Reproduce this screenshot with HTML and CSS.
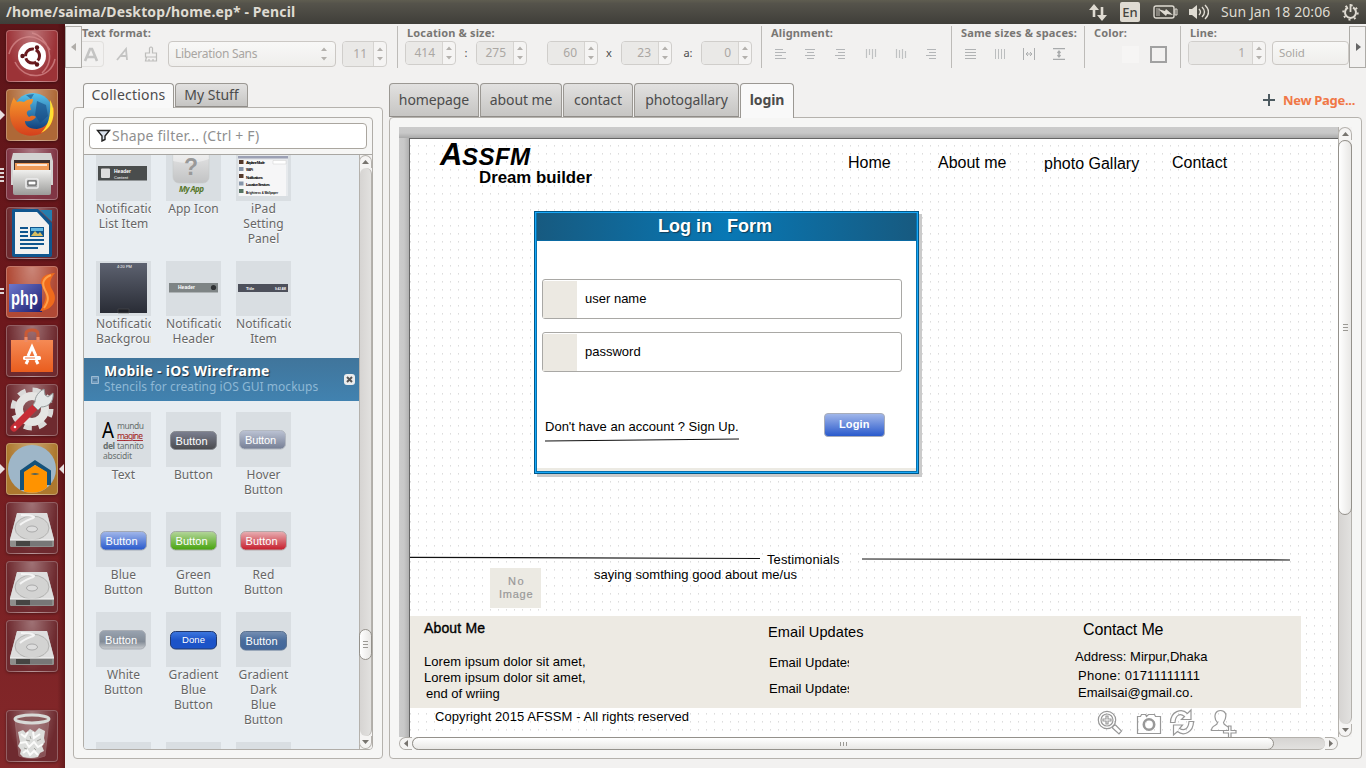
FILE: index.html
```html
<!DOCTYPE html>
<html lang="en">
<head>
<meta charset="utf-8">
<title>home.ep - Pencil</title>
<link rel="stylesheet" href="styles.css">
</head>
<body>
<svg class="defs" width="0" height="0">
  <defs>
    <linearGradient id="steel" x1="0" y1="0" x2="0" y2="1"><stop offset="0" stop-color="#f0f0ee"/><stop offset="1" stop-color="#9b9b99"/></linearGradient>
    <linearGradient id="appicon" x1="0" y1="0" x2="0" y2="1"><stop offset="0" stop-color="#f4f4f4"/><stop offset="1" stop-color="#c2c3c4"/></linearGradient>
    <linearGradient id="globe" x1="0" y1="0" x2="0" y2="1"><stop offset="0" stop-color="#57c4ee"/><stop offset="1" stop-color="#0a3270"/></linearGradient>
    <linearGradient id="fox" x1="0" y1="0" x2="0" y2="1"><stop offset="0" stop-color="#f79a2c"/><stop offset="1" stop-color="#d5401c"/></linearGradient>
    <linearGradient id="orange" x1="0" y1="0" x2="0" y2="1"><stop offset="0" stop-color="#f58a55"/><stop offset="1" stop-color="#e95d1e"/></linearGradient>
    <linearGradient id="php" x1="0" y1="0" x2="1" y2="1"><stop offset="0" stop-color="#6d78cc"/><stop offset="1" stop-color="#1d1e70"/></linearGradient>
    <linearGradient id="dlg" x1="0" y1="0" x2="1" y2="0"><stop offset="0" stop-color="#175a80"/><stop offset=".5" stop-color="#0878b5"/><stop offset="1" stop-color="#175a80"/></linearGradient>
    <linearGradient id="gBlue" x1="0" y1="0" x2="0" y2="1"><stop offset="0" stop-color="#a3b8ea"/><stop offset="1" stop-color="#2758cc"/></linearGradient>
    <linearGradient id="gGreen" x1="0" y1="0" x2="0" y2="1"><stop offset="0" stop-color="#b5d69c"/><stop offset="1" stop-color="#46a30c"/></linearGradient>
    <linearGradient id="gRed" x1="0" y1="0" x2="0" y2="1"><stop offset="0" stop-color="#e8b0b4"/><stop offset="1" stop-color="#c61c2a"/></linearGradient>
    <linearGradient id="gDark" x1="0" y1="0" x2="0" y2="1"><stop offset="0" stop-color="#7c8090"/><stop offset="1" stop-color="#4a4b4f"/></linearGradient>
    <linearGradient id="gHover" x1="0" y1="0" x2="0" y2="1"><stop offset="0" stop-color="#bcc3d4"/><stop offset="1" stop-color="#757e94"/></linearGradient>
    <linearGradient id="gWhite" x1="0" y1="0" x2="0" y2="1"><stop offset="0" stop-color="#99a3b0"/><stop offset=".6" stop-color="#838c97"/><stop offset="1" stop-color="#c9cccf"/></linearGradient>
    <linearGradient id="gDone" x1="0" y1="0" x2="0" y2="1"><stop offset="0" stop-color="#3e78df"/><stop offset=".5" stop-color="#1c53c8"/><stop offset="1" stop-color="#1c53c8"/></linearGradient>
    <linearGradient id="gNavy" x1="0" y1="0" x2="0" y2="1"><stop offset="0" stop-color="#7790b3"/><stop offset=".5" stop-color="#496c9c"/><stop offset="1" stop-color="#42669a"/></linearGradient>
    <linearGradient id="gNight" x1="0" y1="0" x2="0" y2="1"><stop offset="0" stop-color="#5d6270"/><stop offset="1" stop-color="#292c35"/></linearGradient>
    <pattern id="dots" x="0" y="6" width="8" height="8" patternUnits="userSpaceOnUse"><rect width="1" height="1.6" fill="#dcdcdc"/></pattern>
    <symbol id="drive" viewBox="0 0 52 52">
      <path d="M11 11h30l7 26v6q0 2-2 2H6q-2 0-2-2v-6z" fill="#b8b8b6"/>
      <path d="M11 11h30l7 27H4z" fill="#dedede"/>
      <ellipse cx="26" cy="26" rx="17" ry="12" fill="#d3d3d2" stroke="#b2b2b0"/>
      <path d="M15 13c8 0 12 1 13 2s-9 3-14 8" fill="none" stroke="#f4f4f4" stroke-width="2"/>
      <ellipse cx="26" cy="27" rx="5.500" ry="3" fill="#ddd" stroke="#aaa"/>
      <path d="M4 38h44v5q0 2-2 2H6q-2 0-2-2z" fill="#8e8e8c"/>
      <path d="M10 39h26v5H10z" fill="#454543"/><path d="M24 39h22v5H24z" fill="#777"/><path d="M4 38h44" stroke="#f6f6f6"/>
    </symbol>
    <symbol id="al" viewBox="0 0 12 12"><path d="M1 1.500h8M1 4.500h11M1 7.500h7M1 10.500h11" stroke="#b4b6b8"/></symbol>
    <symbol id="ac" viewBox="0 0 12 12"><path d="M1 1.500h10M3 4.500h7M1 7.500h10M3 10.500h7" stroke="#b4b6b8"/></symbol>
    <symbol id="ar" viewBox="0 0 12 12"><path d="M2 1.500h9M4 4.500h7M1 7.500h10M4 10.500h7" stroke="#b4b6b8"/></symbol>
    <symbol id="up" viewBox="0 0 12 12"><path d="M1.500 1v9M4.500 1v6M7.500 1v10M10.500 1v8" stroke="#c0c2c3" stroke-width="1.200"/></symbol>
    <symbol id="mid" viewBox="0 0 12 12"><path d="M1.500 1v9M4.500 2v8M7.500 1v10M10.500 3v7" stroke="#c0c2c3" stroke-width="1.200"/></symbol>
    <symbol id="steps" viewBox="0 0 12 26"><path d="M3 10l3-3.500L9 10zM3 16l3 3.500L9 16z" fill="#b4b1ad"/></symbol>
  </defs>
</svg>

<header class="menubar">
  <h1 class="wintitle">/home/saima/Desktop/home.ep* - Pencil</h1>
  <div class="tray">
    <svg width="20" height="20" viewBox="0 0 20 20"><path d="M6 4v11M14 5v11" stroke="#dfdbd2" stroke-width="2.600"/><path d="M1 8l5-6 5 6zM9 13l5 6 5-6z" fill="#dfdbd2"/></svg>
    <span class="lang">En</span>
    <svg class="batt" width="25" height="14" viewBox="0 0 25 14"><rect x="1" y="1" width="20" height="12" rx="2" fill="none" stroke="#dfdbd2" stroke-width="1.400"/><path d="M22 4h2v6h-2z" fill="none" stroke="#dfdbd2"/><path d="M3 3h4v8H3z" fill="#85827b"/><path d="M5 4l7 2 1-2 7 6-6-1-1 2z" fill="#dfdbd2"/></svg>
    <svg class="snd" width="20" height="16" viewBox="0 0 20 16"><path d="M0 5h3l5-4v14l-5-4H0z" fill="#dfdbd2"/><path d="M10 5q3 3 0 6M13 3q5 5 0 10M16 1q7 7 0 14" fill="none" stroke="#dfdbd2" stroke-width="1.400"/></svg>
    <span class="clock">Sun Jan 18 20:06</span>
    <svg width="17" height="17" viewBox="0 0 17 17"><path d="M6 3.500a5.500 5.500 0 1 0 5 0" fill="none" stroke="#dfdbd2" stroke-width="2"/><path d="M8.500 0v8" stroke="#dfdbd2" stroke-width="1.800"/><circle cx="8.500" cy="8.500" r="7.200" fill="none" stroke="#dfdbd2" stroke-width="2" stroke-dasharray="2 3.650"/></svg>
  </div>
</header>

<div class="desktop">
<nav class="launcher">
  <div class="tile red"><svg viewBox="0 0 52 52"><path d="M3 24C8 4 32 0 44 20M49 29C45 49 19 52 9 32M26 3c15 3 25 26 10 40" fill="none" stroke="#d98e90" stroke-width="1.500" opacity=".7"/><circle cx="26" cy="26" r="14" fill="#fff"/><circle cx="26.500" cy="26" r="7" fill="none" stroke="#6b1a1e" stroke-width="3" stroke-dasharray="12.600 2" stroke-dashoffset="-7"/><circle cx="16.500" cy="26" r="2.200" fill="#5c1519"/><circle cx="31" cy="17.500" r="2.200" fill="#5c1519"/><circle cx="31" cy="34.500" r="2.200" fill="#5c1519"/></svg></div>
  <div class="tile tan"><i class="pip"></i><svg viewBox="0 0 52 52"><circle cx="27" cy="24" r="20" fill="url(#globe)"/><path d="M31 12l9 4 2 11-8 7-5-8zM20 6l8-1-3 5z" fill="#164b86" opacity=".6"/><path d="M8 8c-6 12-4 18-3 24 4 14 18 17 29 13 10-4 15-14 14-27l-3 4c0 10-5 17-14 18-9 0-12-4-12-8 4 1 8 0 11-4-3-2-5-1-7 0-4-4-2-7 2-7l-1-5c2-1 3-3 3-6-4 0-7 1-9 3-3-1-5-1-7 0-2-2-3-4-3-5z" fill="url(#fox)"/><path d="M44 11c6 10 5 27-9 33 7-7 10-16 9-33z" fill="#ffdf32"/></svg></div>
  <div class="tile wine"><i class="pips"></i><svg viewBox="0 0 52 52"><path d="M7 5h38l2 8v24H5V13z" fill="#d3d3d2"/><path d="M8 12h36v12H8z" fill="#3d302d"/><path d="M9 15h34v9H9z" fill="#ee9b57"/><path d="M11 17h30" stroke="#fff" stroke-width="1.500"/><path d="M7 22h38v23q0 2-2 2H9q-2 0-2-2z" fill="url(#steel)"/><rect x="20" y="31" width="12" height="9" rx="1" fill="#aaa" stroke="#eee" stroke-width="1.600"/><path d="M22 33h8v4h-8z" fill="#fff" stroke="#555"/></svg></div>
  <div class="tile dark"><svg viewBox="0 0 52 52"><path d="M6 3q0-1 2-1h24l14 14v32q0 2-2 2H8q-2 0-2-2z" fill="#10568e"/><path d="M9 5h22l12 13v29H9z" fill="#f1f1f0"/><path d="M34 3h12v12z" fill="#247eae"/><path d="M14 21h8M14 25h8M14 29h8M14 33h24M14 37h24M14 41h18" stroke="#10568e" stroke-width="2"/><path d="M24 20h14v10H24z" fill="#10568e"/><path d="M25 21h12v3H25z" fill="#65b9e0"/><path d="M25 29l4-5 3 3 2-2 3 4z" fill="#dabd60"/></svg></div>
  <div class="tile rust"><i class="pips two"></i><svg viewBox="0 0 52 52"><path d="M3 18h33v28H3z" fill="url(#php)"/><path d="M49 7C35 8 33 15 37 22c3 6 5 10-3 23 13-1 18-11 13-20-4-6-4-11 2-18z" fill="#ef6a1c"/><path d="M45 9c-9 4-9 9-6 15 4 7 4 11-1 18" fill="none" stroke="#ffa04a" stroke-width="2"/><text x="5" y="39" class="phptext" textLength="27" lengthAdjust="spacingAndGlyphs">php</text></svg></div>
  <div class="tile dark"><svg viewBox="0 0 52 52"><path d="M20 17V9q0-4 6-4t6 4v8" fill="none" stroke="#c95a35" stroke-width="3"/><path d="M5 15h42v32H5z" fill="url(#orange)"/><path d="M20 17v-5M32 17v-5" stroke="#ed8b67" stroke-width="3"/><path d="M20 39l2-4M32 39l-2-4M22 31l4-9 4 9" fill="none" stroke="#fff" stroke-width="3"/><rect x="17" y="31" width="18" height="4" rx="1.500" fill="#fff"/><path d="M19 33h10" stroke="#ee7440"/></svg></div>
  <div class="tile dark"><svg viewBox="0 0 52 52"><circle cx="26" cy="25" r="19" fill="none" stroke="#dadad9" stroke-width="5" stroke-dasharray="8 6.920"/><circle cx="26" cy="25" r="13" fill="none" stroke="#e5e5e3" stroke-width="8"/><path d="M8 44L30 22" stroke="#c72d36" stroke-width="7" stroke-linecap="round"/><path d="M29 18c0-5 3-10 9-13l1 6 3 2 5-4c1 8-4 14-12 14l-3 3-5-5z" fill="#e3e7e7" stroke="#949b9b"/><circle cx="9" cy="43" r="1.300" fill="#fff"/></svg></div>
  <div class="tile gold"><i class="pip"></i><i class="pip focus"></i><svg viewBox="0 0 52 52"><circle cx="26" cy="26" r="24" fill="#9eb6c8"/><path d="M16 47V28.500l13-9 14 9V42" fill="none" stroke="#15527a" stroke-width="4"/><path d="M18 48.500V29l11-7 12 7v15.500q-10 8-23 4z" fill="#ff9300"/><path d="M24.500 31q4.500-1.500 9 0-4.500 1.500-9 0z" fill="#15527a"/></svg></div>
  <div class="tile dark"><svg><use href="#drive"/></svg></div>
  <div class="tile dark"><svg><use href="#drive"/></svg></div>
  <div class="tile dark"><svg><use href="#drive"/></svg></div>
  <div class="tile dark trash"><svg viewBox="0 0 52 52"><path d="M9 9h34l-4 37q-13 5-26 0z" fill="#d4c4c4" opacity=".25" stroke="#eee"/><path d="M12 22l5-2 3 3 4-4 5 3 4-4 6 3-1 7 1 4-3 4 2 5-4 2-2 4q-7 2-15 0l-3-3 1-4-3-4 2-4z" fill="#dcdddb"/><path d="M15 24l4 3 3-5M27 22l1 6 6-4M14 33l6-1 3 5 5-5 4 5 5-3M17 43l4-3 3 5 4-4 4 4" fill="none" stroke="#fbfbfa" stroke-width="2"/><path d="M20 30l4 1M31 31l4-2M18 38l3 1M28 38l2 2M24 26l1 3" stroke="#a3a39f"/><ellipse cx="26" cy="9" rx="17" ry="4" fill="#8a5a5c" stroke="#d8dad7" stroke-width="3"/></svg></div>
</nav>

<main class="app">
  <section class="toolbar">
    <button class="scroller"><svg width="8" height="10" viewBox="0 0 8 10"><path d="M6 1v8L1 5z" fill="#b0ada9"/></svg></button>
    <div class="group g-text"><h2>Text format:</h2>
      <div class="row">
        <span class="bold"><svg width="18" height="18" viewBox="0 0 18 18"><path d="M3 15L8 3h2l5 12M5 11h8" fill="none" stroke="#c4c4c3" stroke-width="2.600"/></svg></span>
        <svg class="ital" width="16" height="16" viewBox="0 0 16 16"><path d="M2 14L11 3l1 11M5 10h7" fill="none" stroke="#c4c4c3" stroke-width="1.800"/></svg>
        <svg class="brush" width="14" height="18" viewBox="0 0 14 18"><path d="M5.500 8V3q1.500-2 3 0v5h4v4h-11V8zM2.500 12l-1 4h11v-4M5 16v-2M9 16v-2" fill="none" stroke="#bdbdbb" stroke-width="1.200"/></svg>
        <span class="select font">Liberation Sans<svg width="12" height="26"><use href="#steps"/></svg></span>
        <span class="spin size"><b>11</b><svg width="12" height="26"><use href="#steps"/></svg></span>
      </div></div>
    <div class="group g-loc"><h2>Location &amp; size:</h2>
      <div class="row">
        <span class="spin"><b>414</b><svg width="12" height="24" viewBox="0 1 12 24"><use href="#steps" width="12" height="26"/></svg></span><span class="sep s1">:</span>
        <span class="spin"><b>275</b><svg width="12" height="24" viewBox="0 1 12 24"><use href="#steps" width="12" height="26"/></svg></span><span class="sep s2"></span>
        <span class="spin"><b>60</b><svg width="12" height="24" viewBox="0 1 12 24"><use href="#steps" width="12" height="26"/></svg></span><span class="sep s3">x</span>
        <span class="spin"><b>23</b><svg width="12" height="24" viewBox="0 1 12 24"><use href="#steps" width="12" height="26"/></svg></span><span class="sep s4">a:</span>
        <span class="spin"><b>0</b><svg width="12" height="24" viewBox="0 1 12 24"><use href="#steps" width="12" height="26"/></svg></span>
      </div></div>
    <div class="group g-align"><h2>Alignment:</h2>
      <div class="row icons"><svg><use href="#al"/></svg><svg><use href="#ac"/></svg><svg><use href="#ar"/></svg><svg><use href="#up"/></svg><svg><use href="#mid"/></svg><svg><use href="#ar"/></svg></div></div>
    <div class="group g-same"><h2>Same sizes &amp; spaces:</h2>
      <div class="row icons"><svg viewBox="0 0 12 12"><path d="M1 1.500h11M1 4.500h11M1 7.500h11M1 10.500h11" stroke="#b0b2b3"/></svg><svg viewBox="0 0 12 12"><path d="M1.500 1v10M4.500 1v10M7.500 1v10M10.500 1v10" stroke="#bcbebf"/></svg><svg viewBox="0 0 12 12"><path d="M.5 0v12M11.500 0v12M3 6h6M5 4L3 6l2 2M7 4l2 2-2 2" fill="none" stroke="#adafb0"/></svg><svg viewBox="0 0 12 12"><path d="M0 .7h12M0 11.300h12M6 3v6M4.500 5L6 3l1.500 2M4.500 7L6 9l1.500-2" fill="none" stroke="#a8aaab" stroke-width="1.300"/></svg></div></div>
    <div class="group g-color"><h2>Color:</h2>
      <div class="row"><span class="swatch"></span><span class="swatch outline"></span></div></div>
    <div class="group g-line"><h2>Line:</h2>
      <div class="row"><span class="spin wide"><b>1</b><svg width="12" height="24" viewBox="0 1 12 24"><use href="#steps" width="12" height="26"/></svg></span><span class="select solid">Solid</span></div></div>
    <button class="scroller right"><svg width="8" height="10" viewBox="0 0 8 10"><path d="M2 1v8l5-4z" fill="#666"/></svg></button>
  </section>

  <div class="work">
    <aside class="side">
      <div class="tabs small"><span class="tab on t-col">Collections</span><span class="tab t-my">My Stuff</span></div>
      <div class="panel sidepanel"><div class="box">
        <div class="filter"><svg width="15" height="13" viewBox="0 0 15 13"><path d="M1.500 1.500h12L9 7v3.500L6 12V7z" fill="#dbe3ee" stroke="#222" stroke-width="1.400"/></svg><span>Shape filter... (Ctrl + F)</span></div>
        <div class="listrow">
          <div class="list">
            <div class="shapes first">
              <figure><svg viewBox="0 0 55 55"><rect x="2" y="20" width="49" height="14.500" fill="#4a4d4d"/><rect x="5" y="22.500" width="9" height="9.500" rx="1" fill="#ddd"/><text x="18" y="27" class="t5 w b">Header</text><text x="18" y="32.500" class="t4 w">Content</text></svg><figcaption>Notification List Item</figcaption></figure>
              <figure><svg viewBox="0 0 55 55"><rect x="7" y="-8" width="36" height="45" rx="6" fill="url(#appicon)" stroke="#c8c9ca" stroke-width=".6"/><path d="M7 15q18 5 36-2V6H7z" fill="#fff" opacity=".4"/><text x="18" y="29" class="q">?</text><text x="13" y="46" class="t7 my" textLength="25">My App</text></svg><figcaption>App Icon</figcaption></figure>
              <figure><svg viewBox="0 0 55 55"><path d="M2 0h50v50H2z" fill="#e6e9ec"/><path d="M2 10h50v2.500H2z" fill="#9ba0b4"/><path d="M3 14h47v36H3z" fill="#f6f6f7"/><path d="M3 14h4.500v4H3zM3 28h4.500v4H3z" fill="#54392b"/><path d="M3 21h4.500v4H3zM3 35.500h4.500v4H3z" fill="#8796aa"/><path d="M3 43h4.500v4H3z" fill="#567362"/><g class="t4 b"><text x="10" y="18" textLength="19">Airplane Mode</text><text x="10" y="25" textLength="7">Wi-Fi</text><text x="10" y="32.500" textLength="17">Notifications</text><text x="10" y="40" textLength="24">Location Services</text><text x="10" y="47.500" textLength="32" lengthAdjust="spacingAndGlyphs">Brightness &amp; Wallpaper</text></g><path d="M37 14.500h13v3.500H37z" fill="#fff" stroke="#ccc" stroke-width=".5"/></svg><figcaption>iPad Setting Panel</figcaption></figure>
              <figure><svg viewBox="0 0 55 55"><path d="M4 2h47v50H4z" fill="url(#gNight)"/><path d="M22 48h11v4H22z" fill="#202229" stroke="#555" stroke-width=".5"/><text x="21" y="6.500" class="t4 w">4:20 PM</text></svg><figcaption>Notification Background</figcaption></figure>
              <figure><svg viewBox="0 0 55 55"><path d="M3 22h49v9H3z" fill="#7e8485"/><path d="M3 31.500h49" stroke="#aeb3b5"/><text x="12" y="28" class="t5 w b">Header</text><circle cx="47.500" cy="26.500" r="2.600" fill="#2e3133"/></svg><figcaption>Notification Header</figcaption></figure>
              <figure><svg viewBox="0 0 55 55"><path d="M2 23h50v8H2z" fill="#4d505b"/><text x="10" y="29" class="t4 w b">Title</text><text x="39" y="29" class="t4 w b" textLength="11" lengthAdjust="spacingAndGlyphs">9:42 AM</text></svg><figcaption>Notification Item</figcaption></figure>
            </div>
            <div class="band"><svg class="minus" width="8" height="8" viewBox="0 0 8 8"><path d="M.5.5h7v7h-7z" fill="#6c98bc" stroke="#9dbbd2"/><path d="M2 4h4" stroke="#2c5878"/></svg>
              <div class="bandtext"><strong>Mobile - iOS Wireframe</strong><span>Stencils for creating iOS GUI mockups</span></div>
              <svg width="11" height="11" viewBox="0 0 11 11"><rect width="11" height="11" rx="3" fill="#eceded"/><path d="M3 3l5 5M8 3L3 8" stroke="#555" stroke-width="2"/></svg></div>
            <div class="shapes">
              <figure><svg viewBox="0 0 55 55"><text x="6" y="26" class="bigA" textLength="12" lengthAdjust="spacingAndGlyphs">A</text><g class="t8"><text x="21" y="17" textLength="27">mundu</text><text x="21" y="27" class="mag" textLength="26">magine</text><text x="7" y="37" class="b" textLength="12">del</text><text x="21" y="37" textLength="27">tannito</text><text x="7" y="47" textLength="29">abscidit</text></g></svg><figcaption>Text</figcaption></figure>
              <figure><svg viewBox="0 0 55 55"><rect x="4.500" y="19.500" width="46" height="18" rx="5" fill="url(#gDark)" stroke="#888b91"/><text x="9.500" y="32.500" class="btn" textLength="32">Button</text></svg><figcaption>Button</figcaption></figure>
              <figure><svg viewBox="0 0 55 55"><rect x="3.500" y="18.500" width="46" height="18.500" rx="5" fill="url(#gHover)" stroke="#b3b8c0"/><text x="9" y="31.500" class="btn" textLength="31">Button</text></svg><figcaption>Hover Button</figcaption></figure>
              <figure><svg viewBox="0 0 55 55"><rect x="4.500" y="19.500" width="46" height="18.500" rx="5" fill="url(#gBlue)" stroke="#a2a8b3"/><text x="9.500" y="32.500" class="btn" textLength="32">Button</text></svg><figcaption>Blue Button</figcaption></figure>
              <figure><svg viewBox="0 0 55 55"><rect x="4.500" y="19.500" width="46" height="18.500" rx="5" fill="url(#gGreen)" stroke="#a5aca3"/><text x="9.500" y="32.500" class="btn" textLength="32">Button</text></svg><figcaption>Green Button</figcaption></figure>
              <figure><svg viewBox="0 0 55 55"><rect x="4.500" y="19.500" width="46" height="18.500" rx="5" fill="url(#gRed)" stroke="#b3a8a9"/><text x="9.500" y="32.500" class="btn" textLength="32">Button</text></svg><figcaption>Red Button</figcaption></figure>
              <figure><svg viewBox="0 0 55 55"><rect x="3.500" y="18.500" width="46" height="18.500" rx="5" fill="url(#gWhite)" stroke="#a7acb3"/><text x="9" y="31.500" class="btn" textLength="32">Button</text></svg><figcaption>White Button</figcaption></figure>
              <figure><svg viewBox="0 0 55 55"><rect x="4.500" y="19.500" width="46" height="17.500" rx="5" fill="url(#gDone)" stroke="#21386d"/><text x="16" y="31" class="btn sm" textLength="23">Done</text></svg><figcaption>Gradient Blue Button</figcaption></figure>
              <figure><svg viewBox="0 0 55 55"><rect x="4.500" y="19.500" width="46" height="18.500" rx="5" fill="url(#gNavy)" stroke="#5c7391"/><text x="9.500" y="32.500" class="btn" textLength="32">Button</text></svg><figcaption>Gradient Dark<br>Blue Button</figcaption></figure>
              <figure><svg></svg></figure><figure><svg></svg></figure><figure><svg></svg></figure>
            </div>
          </div>
          <div class="vbar"><i class="cap top"><svg width="7" height="4" viewBox="0 0 7 4"><path d="M0 4l3.500-4L7 4z"/></svg></i><div class="trough"><i class="thumb"><u></u></i></div><i class="cap bot"><svg width="7" height="4" viewBox="0 0 7 4"><path d="M0 0h7L3.500 4z"/></svg></i></div>
        </div>
      </div></div>
    </aside>

    <section class="editor">
      <div class="tabs big"><span class="tab p1">homepage</span><span class="tab p2">about me</span><span class="tab p3">contact</span><span class="tab p4">photogallary</span><span class="tab on p5">login</span>
        <span class="newpage"><svg width="12" height="12" viewBox="0 0 12 12"><path d="M6 0v12M0 6h12" stroke="#4d5a60" stroke-width="2"/></svg><span>New Page...</span></span></div>
      <div class="panel editpanel">
        <div class="view">
          <div class="sheet">
            <svg class="canvas" width="928" height="598" viewBox="410 139 928 598">
              <svg x="410" y="139" width="928" height="598"><rect width="928" height="598" fill="#fff"/><rect width="928" height="598" fill="url(#dots)"/></svg>
              <g class="logo"><text x="440" y="165" font-size="31">A</text><text x="462" y="165" font-size="24" textLength="68">SSFM</text></g>
              <text x="479" y="183" class="b" font-size="16.800" textLength="113">Dream builder</text>
              <g font-size="16"><text x="848" y="168">Home</text><text x="938" y="168">About me</text><text x="1044" y="169">photo Gallary</text><text x="1172" y="168">Contact</text></g>

              <rect x="537" y="214" width="385" height="263" fill="#cacaca"/>
              <rect x="534.500" y="211.500" width="384" height="262" fill="#fff" stroke="#00588a"/>
              <rect x="535.500" y="212.500" width="382" height="260" fill="none" stroke="#18a8f8"/>
              <rect x="536.500" y="213.500" width="380" height="258" fill="none" stroke="#0872ae"/>
              <rect x="537" y="213" width="379" height="27" fill="url(#dlg)"/><path d="M537 240.500h379" stroke="#0b6aa2"/>
              <path d="M537 468h379v3H537z" fill="#eceae3"/>
              <g class="b" font-size="18"><g class="shade" aria-hidden="true"></g><text class="w lift" x="658" y="232">Log in</text><text class="w lift" x="727" y="232">Form</text></g>
              <g fill="#fff" stroke="#a9a8a5"><rect x="542.500" y="279.500" width="359" height="39" rx="2.500"/><rect x="542.500" y="332.500" width="359" height="39" rx="2.500"/></g>
              <path d="M543 281h34v37h-34zM543 334h34v37h-34z" fill="#ece9e2"/>
              <g font-size="13"><text x="585" y="303">user name</text><text x="585" y="356">password</text><text x="545" y="431" textLength="193.500">Don't have an account ? Sign Up.</text></g>
              <path d="M545 441l194-2" stroke="#111" stroke-width="1.200"/>
              <rect x="824.500" y="413.500" width="60" height="23" rx="3.500" fill="url(#gBlue)" stroke="#a8adba"/>
              <text x="839" y="428" class="b w" font-size="11" textLength="30.500">Login</text>

              <path d="M410 557.300l350 1.200M862 559l428 1" stroke="#111" stroke-width="1.200"/>
              <path d="M490 568h51v40h-51z" fill="#eceae3"/>
              <g class="noimg"><text x="508" y="585" textLength="15.500">No</text><text x="499" y="598" textLength="33.500">Image</text></g>
              <g font-size="13"><text x="767" y="564" textLength="72.500">Testimonials</text><text x="594" y="579" textLength="203">saying somthing good about me/us</text></g>
              <path d="M410 616h891v92H410z" fill="#edeae3"/>
              <text x="424" y="633" class="about" textLength="61">About Me</text>
              <text x="768" y="637" font-size="14.600" textLength="95.500">Email Updates</text>
              <text x="1083" y="635" font-size="16" textLength="80.500">Contact Me</text>
              <g font-size="13">
                <text x="424" y="666" textLength="161.500">Lorem ipsum dolor sit amet,</text><text x="424" y="682" textLength="161.500">Lorem ipsum dolor sit amet,</text><text x="426" y="698">end of wriing</text>
                <svg x="769" y="650" width="80" height="50"><text x="0" y="17">Email Updates</text><text x="0" y="43">Email Updates</text></svg>
                <text x="1075" y="661" textLength="132.500">Address: Mirpur,Dhaka</text><text x="1078" y="680" textLength="122">Phone: 01711111111</text><text x="1078" y="697" textLength="115">Emailsai@gmail.co.</text>
                <text x="435" y="721" textLength="254">Copyright 2015 AFSSM - All rights reserved</text>
              </g>
              <g fill="none" stroke="#989898" stroke-width="1.200">
                <circle cx="1107" cy="720" r="8.700"/><circle cx="1107" cy="720" r="6"/><path d="M1106 716v3h-3v2h3v3h2v-3h3v-2h-3v-3zM1113 726l2.500-1 6 6-2.500 3-6.500-6z"/>
                <path d="M1137.500 716.500h3l1-2h4l1 2 2-2h6l1 2h5v17h-23z"/><circle cx="1149" cy="724.500" r="5.200" stroke-width="2.600"/>
                <path d="M1170.500 722.500c0-11 11-15 17-9l3.500-3.500v9.500h-9.500l3-3c-5-4-9-1-9.500 6zM1193.500 721.500c0 11-10 15-16 10l-4 3.500v-10h9l-3 3.500c5 3 9 0 9.500-7z"/>
                <path d="M1223 730.500h-11.500c0-6 6-4 6-8-3-3-3-6-2-9 2-4 8-4 10 0 1 3 0 6-2 9 0 3 4 3 5 5M1228.500 726h2.500v4.500h5v2.500h-5v4.500h-2.500v-4.500h-5v-2.500h5z"/>
              </g>
            </svg>
          </div>
          <div class="vbar edit"><i class="cap top"><svg width="7" height="4" viewBox="0 0 7 4"><path d="M0 4l3.500-4L7 4z"/></svg></i><div class="trough"><i class="thumb"><u></u></i></div><i class="cap bot"><svg width="7" height="4" viewBox="0 0 7 4"><path d="M0 0h7L3.500 4z"/></svg></i></div>
        </div>
        <div class="hbar"><i class="cap left"><svg width="4" height="7" viewBox="0 0 4 7"><path d="M4 0v7L0 3.500z"/></svg></i><div class="trough"><i class="thumb"><u></u></i></div><i class="cap rt"><svg width="4" height="7" viewBox="0 0 4 7"><path d="M0 0v7l4-3.500z"/></svg></i></div>
      </div>
    </section>
  </div>
</main>
</div>
</body>
</html>
```

FILE: styles.css
```css
* { box-sizing: border-box; }
body { margin: 0; width: 1366px; height: 768px; overflow: hidden; background: #f2f1f0; font-family: "Noto Sans", "Open Sans", sans-serif; color: #4c4c4c; }
svg { display: block; flex: none; }
h1, h2, figure { margin: 0; }
.defs { position: absolute; }
.b { font-weight: bold; }
.w { fill: #fff; }

.menubar { height: 24px; display: flex; justify-content: space-between; align-items: center; padding: 0 7px 0 6px; background: linear-gradient(#5f5d50, #55534b 15%, #3f3e39); color: #dfdbd2; }
.wintitle { font-size: 14px; line-height: 24px; letter-spacing: 0.12px; white-space: nowrap; }
.tray { display: flex; align-items: center; }
.lang { width: 20px; height: 20px; margin: 0 13px 0 12px; border-radius: 2px; background: #dfdbd2; color: #45443e; font-size: 13px; line-height: 20px; text-align: center; font-weight: 500; }
.snd { margin-left: 11px; }
.clock { width: 109px; margin: 0 12px 0 12px; font-size: 14px; line-height: 22px; letter-spacing: 0.08px; white-space: nowrap; }

.desktop { display: flex; height: 744px; }
.launcher { width: 65px; padding: 6px 0 6px 6px; display: flex; flex-direction: column; gap: 7px; background: linear-gradient(90deg, transparent 88%, rgba(40,0,0,.35)), linear-gradient(#5d1519, #6d181c 40%, #84282a); }
.tile { position: relative; width: 52px; height: 52px; flex: none; border-radius: 4px; border: 1px solid rgba(255,255,255,.25); box-shadow: 0 1px 3px rgba(0,0,0,.35); background-image: radial-gradient(ellipse at 50% 0, rgba(255,255,255,.38), rgba(255,255,255,.06) 70%); }
.tile > svg { width: 52px; height: 52px; margin: -1px; }
.red { background-color: #96262b; }
.tan { background-color: #a95f2a; }
.wine { background-color: #782838; }
.dark { background-color: #651d22; }
.rust { background-color: #ab3e28; }
.gold { background-color: #a87021; }
.trash { margin-top: auto; }
.phptext { font: bold 21px "Liberation Sans", sans-serif; fill: #fff; }
.pip { position: absolute; left: -7px; top: 20px; border: 5px solid transparent; border-left-color: #e8e0e0; border-right: 0; }
.pip.focus { left: auto; right: -7px; border: 5px solid transparent; border-right-color: #e8e0e0; border-left: 0; }
.pips { position: absolute; left: -7px; top: 19px; width: 4px; height: 14px; background: repeating-linear-gradient(#ded5d5 0 2px, transparent 2px 4px); }
.pips.two { top: 21px; height: 7px; }

.app { flex: 1; min-width: 0; display: flex; flex-direction: column; }
.toolbar { height: 59px; display: flex; align-items: flex-start; padding-top: 2px; }
.scroller { width: 17px; height: 42px; flex: none; padding: 0; border: 1px solid #adaba7; background: #f2f1f0; display: flex; align-items: center; justify-content: center; }
.group { height: 42px; flex: none; border-right: 1px solid #bdbbb8; overflow: hidden; }
.group h2 { font-size: 11px; line-height: 13px; padding-bottom: 2px; color: #797774; letter-spacing: .15px; white-space: nowrap; }
.row { display: flex; height: 27px; }
.g-text { width: 316px; }
.g-loc { width: 364px; padding-left: 7px; }
.g-loc h2 { padding-left: 2px; }
.g-align { width: 190px; padding-left: 9px; }
.g-same { width: 133px; padding-left: 9px; }
.g-color { width: 96px; padding-left: 9px; }
.g-line { width: 168px; padding-left: 7px; border: 0; }
.g-line h2 { padding-left: 2px; }
.bold { width: 22px; height: 26px; padding: 4px 0 0 0; border: 1px solid #e2e0de; border-left: 0; border-radius: 0 4px 4px 0; }
.ital { margin: 5px 0 0 11px; }
.brush { margin: 4px 0 0 13px; }
.select { display: flex; justify-content: space-between; border: 1px solid #cbc8c4; border-radius: 4px; background: linear-gradient(#f8f8f7, #efeeec); color: #a9a6a2; font-size: 12px; line-height: 24px; padding: 0 5px 0 6px; height: 26px; white-space: nowrap; }
.select.font { width: 168px; margin-left: 10px; letter-spacing: -.3px; }
.select.font svg { margin-top: -1px; }
.select.solid { width: 90px; height: 24px; margin-left: 6px; line-height: 22px; font-size: 11.5px; letter-spacing: -.1px; }
.spin { display: flex; width: 51px; height: 24px; border: 1px solid #d0cecb; border-radius: 4px; overflow: hidden; background: #f5f4f3; flex: none; }
.spin b { flex: 1; padding-right: 7px; background: #eae9e7; border-right: 1px solid #d6d4d1; font-weight: normal; font-size: 12px; line-height: 22px; text-align: right; color: #aaa7a3; }
.spin > svg { margin-top: -1px; }
.spin.size { width: 45px; height: 26px; margin-left: 6px; }
.spin.size b { line-height: 24px; padding-right: 6px; }
.spin.wide { width: 78px; }
.sep { font-size: 11px; line-height: 23px; text-align: center; width: 20px; }
.s3 { width: 23px; padding-right: 1px; }
.s4 { width: 29px; padding-left: 3px; }
.icons { gap: 18.200px; padding: 7px 0 0 0; }
.icons svg { width: 12px; height: 12px; }
.g-same .icons { gap: 17.700px; padding-left: 3px; }
.g-align .icons { padding-left: 3px; }
.swatch { width: 17px; height: 17px; margin: 5px 0 0 28px; background: #f6f5f4; }
.swatch.outline { margin-left: 11px; border: 2px solid #a1a1a1; background: #f2f1f0; }

.work { flex: 1; display: flex; padding: 0 5px 9px 8px; min-height: 0; }
.side { width: 310px; display: flex; flex-direction: column; }
.tabs { display: flex; white-space: nowrap; }
.tabs.small { padding-left: 10px; height: 24px; }
.tab { border: 1px solid #9b9893; border-bottom: 0; border-radius: 4px 4px 0 0; background: linear-gradient(#e2e1e0, #c6c5c3); text-align: center; font-size: 14px; letter-spacing: .2px; margin-right: 1px; }
.small .tab { height: 24px; line-height: 22px; }
.small .tab:not(.on) { height: 24px; border-bottom: 1px solid #8f8c88; letter-spacing: 0; }
.tab.on { background: #f9f9f9; position: relative; margin-bottom: -1px; }
.small .tab.on { height: 25px; }
.t-col { width: 91px; }
.t-my { width: 73px; }
.panel { border: 1px solid #b5b2ad; border-radius: 4px; background: #f6f6f5; }
.sidepanel { flex: 1; padding: 9px; min-height: 0; }
.box { height: 633px; border: 1px solid #b0ada8; border-radius: 4px; display: flex; flex-direction: column; overflow: hidden; }
.filter { height: 26px; margin: 5px 5px 5px; border: 1px solid #aaa69f; border-radius: 4px; background: #fff; display: flex; align-items: center; gap: 1px; padding: 0 0 1px 6px; color: #8f8f8f; font-size: 14px; letter-spacing: .2px; line-height: 22px; }
.listrow { flex: 1; border-top: 1px solid #a9a7a3; display: flex; min-height: 0; }
.list { width: 275px; height: 594px; flex: none; background: #e8edf1; overflow: hidden; }
.shapes { display: grid; grid-template-columns: repeat(3, 55px); column-gap: 15px; row-gap: 15px; padding: 11px 12px 0; }
.shapes.first { margin-top: -9px; padding-top: 0; height: 212px; align-content: start; }
figure { width: 55px; overflow: hidden; }
figure svg { width: 55px; height: 55px; background: #d9dee2; }
figcaption { font-size: 12px; line-height: 15px; text-align: center; color: #666; letter-spacing: .08px; text-shadow: 0 1px #fff; }
.band { height: 43px; display: flex; align-items: center; background: linear-gradient(#40759b, #4182b0); padding: 0 4px 0 7px; }
.bandtext { flex: 1; padding: 0 0 4px 5px; display: flex; flex-direction: column; white-space: nowrap; }
.bandtext strong { color: #fff; font-size: 14px; line-height: 17px; letter-spacing: .27px; text-shadow: 1px 1px 1px #234; }
.bandtext span { color: #8eb8d5; font-size: 12px; line-height: 15px; letter-spacing: .04px; }
.t4 { font: 4px "Liberation Sans", sans-serif; }
.t5 { font: 5px "Liberation Sans", sans-serif; }
.t7 { font: italic bold 8px "Noto Sans", sans-serif; }
.t8 { font: 8.5px "Noto Sans", sans-serif; fill: #68706e; }
.t4.b, .t5.b, .t8 .b { font-weight: bold; }
.my { fill: #557629; }
.q { font: bold 23px "Liberation Sans", sans-serif; fill: #999; }
.bigA { font: 21px "Noto Sans", sans-serif; }
.mag { fill: #a01820; text-decoration: underline; }
.btn { font: 11px "Liberation Sans", sans-serif; fill: #fff; }
.btn.sm { font-size: 9.500px; }

.vbar { width: 14px; display: flex; flex-direction: column; border-left: 1px solid #b4b1ac; background: #f3f2f1; }
.side .vbar { width: 13px; }
.cap { height: 13px; border: 1px solid #b5b2ad; display: flex; align-items: center; justify-content: center; background: #f5f4f3; flex: none; }
.cap svg { fill: #77746f; }
.cap.top { border-radius: 7px 7px 0 0; margin-left: -1px; border-bottom: 0; }
.cap.bot { border-radius: 0 0 7px 7px; margin-left: -1px; border-top: 0; }
.vbar .trough { flex: 1; display: flex; flex-direction: column; background: linear-gradient(90deg, #d6d4d2, #e2e1df); border-radius: 7px; border-right: 1px solid #b4b1ac; }
.thumb { display: flex; align-items: center; justify-content: center; border: 1px solid #94918b; border-radius: 7px; background: linear-gradient(90deg, #fff, #e8e7e5); }
.thumb u { display: block; width: 5px; height: 7px; background: repeating-linear-gradient(#9b9994 0 1px, transparent 1px 3px); }
.side .thumb { height: 31px; margin-top: 461px; margin-left: -1px; margin-right: -1px; }

.editor { width: 973px; margin-left: 6px; display: flex; flex-direction: column; }
.tabs.big { height: 34px; }
.big .tab { height: 34px; line-height: 32px; font-size: 14px; letter-spacing: -.1px; border-bottom: 1px solid #8f8c88; }
.big .tab.on { height: 35px; border-bottom: 0; font-weight: bold; }
.p1 { width: 90px; }
.p2 { width: 82px; }
.p3 { width: 70px; }
.p4 { width: 105px; }
.p5 { width: 54px; }
.newpage { margin-left: auto; display: flex; align-items: center; gap: 8px; color: #f07746; font-size: 13px; font-weight: bold; padding-right: 7px; letter-spacing: -.3px; }
.editpanel { flex: 1; padding: 9px; min-height: 0; }
.view { display: flex; height: 610px; }
.sheet { width: 939px; padding: 11px 0 0 10px; background: linear-gradient(#cbcbcb 0, #c8c8c8 6px, #aaa 11px, transparent 11px), linear-gradient(90deg, #cbcbcb 0, #c8c8c8 5px, #b0b0b0 10px, #fff 10px); }
.canvas { width: 929px; height: 599px; border-left: 1px solid #666; border-top: 1px solid #666; font-family: "Liberation Sans", sans-serif; }
.logo { font-weight: bold; font-style: italic; }
.lift { text-shadow: 1px 1px 1px #123f5a; }
.about { font-size: 14px; stroke: #000; stroke-width: .35px; }
.noimg { font-size: 11px; fill: #999; stroke: #999; stroke-width: .2px; }
.vbar.edit .thumb { height: 375px; margin-right: -1px; margin-left: -1px; }
.hbar { height: 13px; width: 939px; display: flex; }
.hbar .cap { width: 13px; border: 1px solid #b0ada8; }
.hbar .cap.left { border-radius: 7px 0 0 7px; border-right: 0; }
.hbar .cap.rt { border-radius: 0 7px 7px 0; border-left: 0; }
.hbar .trough { flex: 1; background: linear-gradient(#d6d4d2, #e2e1df); border-radius: 7px; border: 1px solid #b4b1ac; border-width: 1px 0; display: flex; }
.hbar .thumb { width: 862px; height: 13px; margin-top: -1px; background: linear-gradient(#fff, #e8e7e5); }
.hbar .thumb u { width: 7px; height: 4px; background: repeating-linear-gradient(90deg, #9b9994 0 1px, transparent 1px 3px); }
```
